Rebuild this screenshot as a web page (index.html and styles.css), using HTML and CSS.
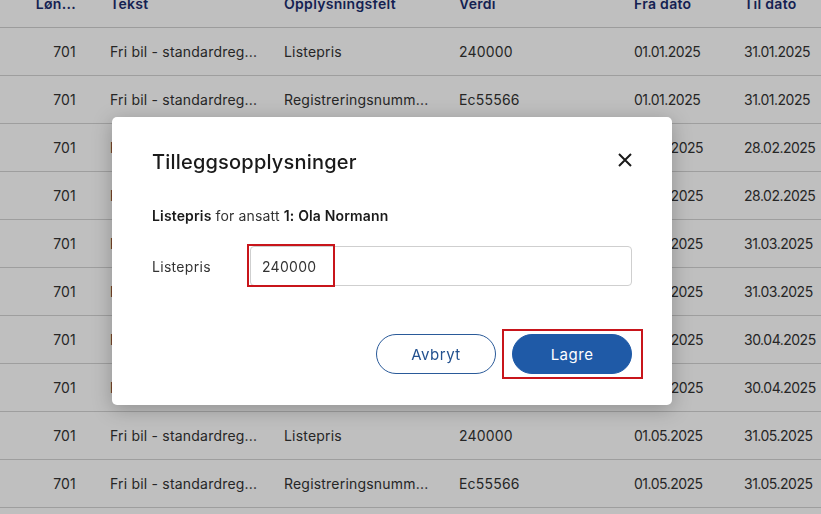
FILE: index.html
```html
<!DOCTYPE html>
<html lang="no">
<head>
<meta charset="utf-8">
<title>Tilleggsopplysninger</title>
<link rel="stylesheet" href="styles.css">
</head>
<body>
<div class="page">
  <div class="table">
    <div class="row head">
      <div class="c c1">Løn...</div>
      <div class="c c2">Tekst</div>
      <div class="c c3">Opplysningsfelt</div>
      <div class="c c4">Verdi</div>
      <div class="c c5">Fra dato</div>
      <div class="c c6">Til dato</div>
    </div>
    <div class="row"><div class="c c1">701</div><div class="c c2">Fri bil - standardreg...</div><div class="c c3">Listepris</div><div class="c c4">240000</div><div class="c c5 d">01.01.2025</div><div class="c c6 d">31.01.2025</div></div>
    <div class="row"><div class="c c1">701</div><div class="c c2">Fri bil - standardreg...</div><div class="c c3">Registreringsnumm...</div><div class="c c4">Ec55566</div><div class="c c5 d">01.01.2025</div><div class="c c6 d">31.01.2025</div></div>
    <div class="row"><div class="c c1">701</div><div class="c c2">Fri bil - standardreg...</div><div class="c c3">Listepris</div><div class="c c4">240000</div><div class="c c5 d">01.02.2025</div><div class="c c6 d">28.02.2025</div></div>
    <div class="row"><div class="c c1">701</div><div class="c c2">Fri bil - standardreg...</div><div class="c c3">Registreringsnumm...</div><div class="c c4">Ec55566</div><div class="c c5 d">01.02.2025</div><div class="c c6 d">28.02.2025</div></div>
    <div class="row"><div class="c c1">701</div><div class="c c2">Fri bil - standardreg...</div><div class="c c3">Listepris</div><div class="c c4">240000</div><div class="c c5 d">01.03.2025</div><div class="c c6 d">31.03.2025</div></div>
    <div class="row"><div class="c c1">701</div><div class="c c2">Fri bil - standardreg...</div><div class="c c3">Registreringsnumm...</div><div class="c c4">Ec55566</div><div class="c c5 d">01.03.2025</div><div class="c c6 d">31.03.2025</div></div>
    <div class="row"><div class="c c1">701</div><div class="c c2">Fri bil - standardreg...</div><div class="c c3">Listepris</div><div class="c c4">240000</div><div class="c c5 d">01.04.2025</div><div class="c c6 d">30.04.2025</div></div>
    <div class="row"><div class="c c1">701</div><div class="c c2">Fri bil - standardreg...</div><div class="c c3">Registreringsnumm...</div><div class="c c4">Ec55566</div><div class="c c5 d">01.04.2025</div><div class="c c6 d">30.04.2025</div></div>
    <div class="row"><div class="c c1">701</div><div class="c c2">Fri bil - standardreg...</div><div class="c c3">Listepris</div><div class="c c4">240000</div><div class="c c5 d">01.05.2025</div><div class="c c6 d">31.05.2025</div></div>
    <div class="row"><div class="c c1">701</div><div class="c c2">Fri bil - standardreg...</div><div class="c c3">Registreringsnumm...</div><div class="c c4">Ec55566</div><div class="c c5 d">01.05.2025</div><div class="c c6 d">31.05.2025</div></div>
    <div class="row"><div class="c c1">701</div><div class="c c2">Fri bil - standardreg...</div><div class="c c3">Listepris</div><div class="c c4">240000</div><div class="c c5 d">01.06.2025</div><div class="c c6 d">30.06.2025</div></div>
  </div>
</div>

<div class="backdrop"></div>

<div class="modal" role="dialog" aria-labelledby="mtitle">
  <div class="modal-head">
    <h2 id="mtitle" class="modal-title">Tilleggsopplysninger</h2>
    <button class="close" aria-label="Lukk">
      <svg width="16" height="16" viewBox="0 0 16 16"><path d="M2 2 L14 14 M14 2 L2 14" stroke="#1a1a1a" stroke-width="2" fill="none"/></svg>
    </button>
  </div>
  <p class="desc"><strong>Listepris</strong> for ansatt <strong>1: Ola Normann</strong></p>
  <div class="field">
    <label class="label" for="lp">Listepris</label>
    <div class="input-wrap">
      <input id="lp" class="input" value="240000">
      <span class="mark mark-input"></span>
    </div>
  </div>
  <div class="actions">
    <button class="btn btn-outline">Avbryt</button>
    <div class="btn-wrap">
      <button class="btn btn-primary">Lagre</button>
      <span class="mark mark-btn"></span>
    </div>
  </div>
</div>
</body>
</html>
```

FILE: styles.css
```css
* { box-sizing: border-box; }
html, body { margin: 0; padding: 0; }
body {
  font-family: Inter, "Open Sans", "Liberation Sans", sans-serif;
  letter-spacing: 0.3px;
  background: #fff;
  width: 821px;
  height: 514px;
  overflow: hidden;
  position: relative;
  color: #333;
}
.page { margin-top: -20px; }
.table { width: 821px; }
.row {
  display: flex;
  height: 48px;
  align-items: center;
  border-bottom: 1px solid #d3d3d3;
  font-size: 14px;
  letter-spacing: 0.2px;
  color: #333;
}
.row.head { color: #1b2d6e; font-weight: 600; border-bottom-color: #d0d0d0; letter-spacing: 0.3px; }
.c {
  padding-left: 16px;
  white-space: nowrap;
  overflow: hidden;
  text-overflow: ellipsis;
  flex: none;
}
.c1 { width: 94px; text-align: right; padding-left: 0; padding-right: 18px; }
.c2 { width: 174px; }
.c3 { width: 175px; }
.c4 { width: 175px; }
.c5 { width: 110px; }
.c6 { width: 100px; overflow: visible; }
.d { letter-spacing: -0.5px; }

.backdrop {
  position: fixed;
  inset: 0;
  background: rgba(0, 0, 0, 0.25);
}

.modal {
  position: absolute;
  left: 112px;
  top: 117px;
  width: 560px;
  height: 288px;
  background: #fff;
  border-radius: 5px;
  box-shadow: 0 4px 20px rgba(0,0,0,0.25);
  padding: 31px 40px 31px 40px;
  display: flex;
  flex-direction: column;
}
.modal-head {
  display: flex;
  justify-content: space-between;
  align-items: center;
  height: 28px;
}
.modal-title {
  margin: 0;
  font-size: 20px;
  font-weight: 500;
  color: #1a1a1a;
  letter-spacing: 0.2px;
}
.close {
  border: 0;
  background: none;
  padding: 0;
  width: 16px;
  height: 16px;
  margin-right: -1px;
  margin-top: -4px;
  cursor: pointer;
}
.close svg { display: block; }
.desc {
  margin: 30px 0 0 0;
  font-size: 14px;
  line-height: 20px;
  letter-spacing: 0.15px;
  color: #333;
}
.desc strong { font-weight: 600; color: #1a1a1a; }
.field {
  display: flex;
  align-items: center;
  margin-top: 20px;
}
.label {
  width: 98px;
  font-size: 14px;
  color: #333;
}
.input-wrap {
  position: relative;
  flex: 1;
}
.input {
  display: block;
  width: 100%;
  height: 40px;
  border: 1px solid #cfcfcf;
  border-radius: 4px;
  padding: 0 11px;
  font-family: inherit;
  letter-spacing: 0.3px;
  font-size: 14px;
  color: #333;
  outline: none;
}
.mark {
  position: absolute;
  border: 2px solid #c8151b;
  pointer-events: none;
}
.mark-input { left: -3px; top: -2px; width: 88px; height: 43px; }
.actions {
  margin-top: auto;
  display: flex;
  justify-content: flex-end;
  gap: 16px;
}
.btn-wrap { position: relative; }
.btn {
  display: block;
  width: 120px;
  height: 40px;
  border-radius: 20px;
  font-family: inherit;
  letter-spacing: 0.5px;
  font-size: 15px;
  cursor: pointer;
}
.btn-outline {
  background: #fff;
  border: 1px solid #2a5a99;
  color: #23518f;
}
.btn-primary {
  background: #1f5aa7;
  border: 1px solid #1f5aa7;
  color: #fff;
}
.mark-btn { left: -10px; top: -5px; width: 141px; height: 50px; }
```
